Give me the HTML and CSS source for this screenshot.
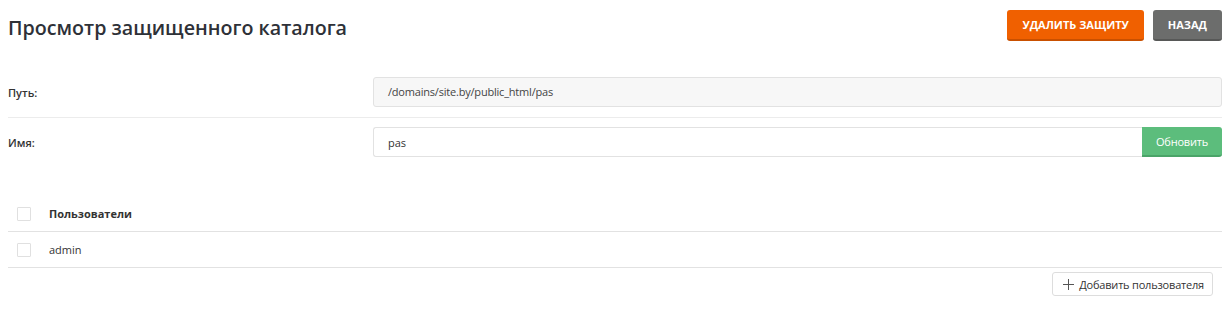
FILE: index.html
```html
<!DOCTYPE html>
<html lang="ru">
<head>
    <meta charset="UTF-8">
    <meta name="viewport" content="width=device-width, initial-scale=1.0">
    <title>Просмотр защищенного каталога</title>
    <link rel="stylesheet" href="styles.css">
</head>
<body>
    <div class="page">
        <div class="page-header">
            <h1>Просмотр защищенного каталога</h1>
            <div class="header-actions">
                <button class="btn btn-orange">Удалить защиту</button>
                <button class="btn btn-gray">Назад</button>
            </div>
        </div>

        <div class="form-row">
            <label>Путь:</label>
            <div class="field field-readonly">/domains/site.by/public_html/pas</div>
        </div>

        <div class="form-row no-border">
            <label for="dirName">Имя:</label>
            <div class="input-group">
                <input type="text" id="dirName" value="pas">
                <button class="btn-green">Обновить</button>
            </div>
        </div>

        <div class="users-table">
            <div class="table-row table-head">
                <span class="checkbox"></span>
                <span>Пользователи</span>
            </div>
            <div class="table-row">
                <span class="checkbox"></span>
                <span>admin</span>
            </div>
        </div>

        <div class="table-footer">
            <button class="btn-add">
                <svg width="11" height="11" viewBox="0 0 11 11"><path d="M5.5 0v11M0 5.5h11" stroke="#555" stroke-width="1"/></svg>
                Добавить пользователя
            </button>
        </div>
    </div>
</body>
</html>
```

FILE: styles.css
```css
:root {
    --text-color: #333;
    --border-color: #e2e2e2;
    --orange: #f06000;
    --gray: #6c6d6c;
    --green: #5cbd7c;
}

body {
    margin: 0;
    font-family: 'Open Sans', 'Noto Sans', sans-serif;
    color: var(--text-color);
    background: #fff;
}

.page {
    padding: 10px 4px 0 8px;
}

.page-header {
    display: flex;
    justify-content: space-between;
    align-items: flex-start;
    margin-bottom: 36px;
}

h1 {
    margin: 4px 0 0;
    font-size: 19.7px;
    font-weight: 600;
    color: #2e3138;
}

.header-actions {
    display: flex;
    gap: 9px;
}

.btn {
    height: 31px;
    padding: 0 15px;
    border: none;
    border-radius: 3px;
    color: #fff;
    font-family: inherit;
    font-size: 11px;
    font-weight: 700;
    text-transform: uppercase;
    white-space: nowrap;
    cursor: pointer;
}

.btn-orange {
    background: var(--orange);
    border-bottom: 2px solid #c95000;
}

.btn-gray {
    background: var(--gray);
    border-bottom: 2px solid #575857;
}

.form-row {
    display: grid;
    grid-template-columns: 365px 1fr;
    align-items: center;
    padding-bottom: 10px;
    border-bottom: 1px solid #ececec;
    margin-bottom: 9px;
}

.form-row.no-border {
    border-bottom: none;
}

label {
    font-size: 11px;
    font-weight: 600;
}

.field {
    height: 28px;
    line-height: 28px;
    padding: 0 14px;
    border: 1px solid var(--border-color);
    border-radius: 3px;
    font-size: 11px;
    letter-spacing: -0.2px;
    color: #444;
}

.field-readonly {
    background: #f7f7f7;
}

.input-group {
    display: flex;
    height: 30px;
}

.input-group input {
    flex: 1;
    margin: 0;
    padding: 0 14px;
    border: 1px solid var(--border-color);
    border-right: none;
    border-radius: 3px 0 0 3px;
    font-family: inherit;
    font-size: 11px;
    color: #333;
    outline: none;
}

.btn-green {
    width: 80px;
    border: none;
    border-bottom: 2px solid #4aa468;
    border-radius: 0 3px 3px 0;
    background: var(--green);
    color: #fff;
    font-family: inherit;
    font-size: 11px;
    letter-spacing: -0.2px;
    cursor: pointer;
}

.users-table {
    margin-top: 29px;
}

.table-row {
    display: flex;
    align-items: center;
    gap: 18px;
    height: 35px;
    padding-left: 9px;
    border-bottom: 1px solid #e2e2e2;
    font-size: 11px;
}

.table-head {
    font-weight: 700;
}

.checkbox {
    width: 12px;
    height: 12px;
    border: 1px solid #e0e0e0;
    border-radius: 1px;
}

.table-footer {
    display: flex;
    justify-content: flex-end;
    padding: 4px 9px 0 0;
}

.btn-add {
    display: flex;
    align-items: center;
    gap: 5px;
    height: 24px;
    padding: 0 8px 0 10px;
    border: 1px solid #ddd;
    border-radius: 3px;
    background: #fff;
    font-family: inherit;
    font-size: 11px;
    letter-spacing: -0.2px;
    color: #333;
    cursor: pointer;
}
```
